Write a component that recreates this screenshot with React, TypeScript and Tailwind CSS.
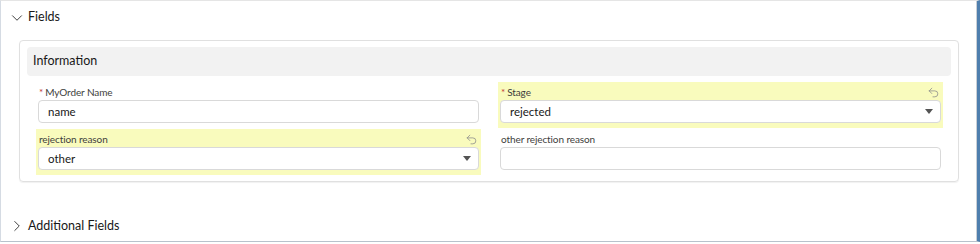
import { ChevronDown, ChevronRight, Undo2 } from 'lucide-react'

interface Field {
  label: string
  value: string
  required?: boolean
  select?: boolean
  changed?: boolean
}

const rows: Field[][] = [
  [
    { label: 'MyOrder Name', value: 'name', required: true },
    { label: 'Stage', value: 'rejected', required: true, select: true, changed: true },
  ],
  [
    { label: 'rejection reason', value: 'other', select: true, changed: true },
    { label: 'other rejection reason', value: '' },
  ],
]

function FieldCell({ field }: { field: Field }) {
  return (
    <div className={`h-[46px] px-[2px] pt-[3px] ${field.changed ? 'bg-[#f9fbbd]' : ''}`}>
      <div className="flex h-[14px] items-center justify-between px-[1px] text-[10px] tracking-[-0.1px] text-[#3e3e3c]">
        <span>
          {field.required && <span className="mr-[2px] text-[#c23934]">*</span>}
          {field.label}
        </span>
        {field.changed && <Undo2 className="h-[13px] w-[13px] text-[#8a8a8a]" strokeWidth={1.4} />}
      </div>
      <div className="mt-[1px] flex h-[23px] items-center justify-between rounded-[4px] border border-[#d9d9d9] bg-white pl-[9px] pr-[7px] text-[11.5px] text-[#181818]">
        <span>{field.value}</span>
        {field.select && (
          <span className="h-0 w-0 border-l-[4px] border-r-[4px] border-t-[5px] border-l-transparent border-r-transparent border-t-[#545454]" />
        )}
      </div>
    </div>
  )
}

export default function App() {
  return (
    <div className="h-[244px] w-[980px] bg-white font-['Lato',sans-serif]">
      <div className="flex h-[242px] w-[980px] border-b border-l border-r-[3px] border-t border-b-[#b8c2cc] border-l-[#d5dbe3] border-r-[#4f7fae] border-t-[#e5e5e5]">
        <div className="flex-1 border-r border-[#c9cfd6]">
          <div className="flex h-[33px] items-center pl-[7px] text-[12.5px] text-[#181818]">
            <ChevronDown className="mr-[2px] h-[18px] w-[18px]" strokeWidth={1.1} />
            <span>Fields</span>
          </div>

          <div className="ml-[18px] mt-[6px] h-[142px] w-[940px] rounded-[4px] border border-[#e0e0e0] px-[7px] pt-[6px] shadow-[0_1px_1px_rgba(0,0,0,0.06)]">
            <div className="flex h-[29px] items-center rounded-[4px] bg-[#f2f2f2] pl-[6px] text-[12.5px] text-[#181818]">
              Information
            </div>
            <div className="mt-[6px] flex flex-col gap-[1px] pl-[9px] pr-[8px]">
              {rows.map((row, i) => (
                <div key={i} className="grid grid-cols-2 gap-x-[17px]">
                  {row.map((f) => (
                    <FieldCell key={f.label} field={f} />
                  ))}
                </div>
              ))}
            </div>
          </div>

          <div className="mt-[30px] flex h-[28px] items-center pl-[7px] text-[12.5px] text-[#181818]">
            <ChevronRight className="mr-[2px] h-[18px] w-[18px]" strokeWidth={1.1} />
            <span>Additional Fields</span>
          </div>
        </div>
      </div>
    </div>
  )
}
